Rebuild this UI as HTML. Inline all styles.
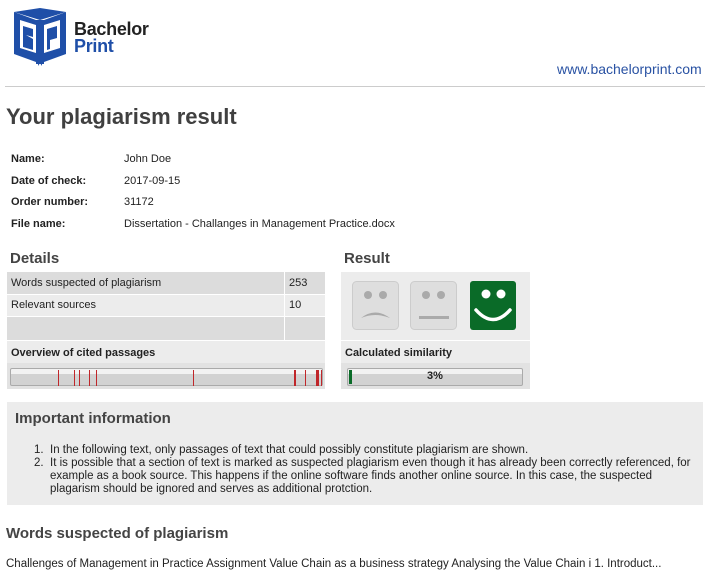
<!DOCTYPE html>
<html><head><meta charset="utf-8"><style>
*{margin:0;padding:0;box-sizing:border-box}
body{width:714px;height:577px;background:#fff;font-family:"Liberation Sans",sans-serif;color:#222;position:relative;overflow:hidden}
.a{position:absolute;white-space:nowrap}
.lab{font-weight:bold;font-size:11px;color:#222}
.val{font-size:11px;color:#222}
h2{font-size:15px;font-weight:bold;color:#444}
.red{position:absolute;top:1px;width:1px;height:16px;background:#c0262a}
</style></head><body>
<svg class="a" style="left:12px;top:6px" width="56" height="60" viewBox="0 0 56 60">
<path d="M2 6 L24 14 L24 56 L2 48 Z M32 14 L54 6 L54 48 L32 56 Z" fill="#1f4fa8"/>
<path d="M2 6 L28 2 L54 6 L28 14 Z" fill="#1f4fa8"/>
<path d="M8 14 L24 19 L24 47 L8 42 Z M32 19 L48 14 L48 42 L32 47 Z" fill="#fff"/>
<path d="M11 20 L21 23 L21 31 L14 29 L21 33 L21 44 L11 41 Z" fill="#1f4fa8"/>
<path d="M35 23 L45 20 L45 32 L38 34 L38 43 L35 44 Z" fill="#1f4fa8"/>
<rect x="24" y="14" width="8" height="44" fill="#1f4fa8"/>
<path d="M26 52 L30 52 L30 60 L28 57 L26 60 Z" fill="#1f4fa8"/>
</svg>
<div class="a" style="left:74px;top:20px;font-size:18px;font-weight:bold;color:#222;line-height:18px;letter-spacing:-0.3px">Bachelor</div>
<div class="a" style="left:74px;top:37px;font-size:18px;font-weight:bold;color:#1f4fa8;line-height:18px;letter-spacing:-0.3px">Print</div>
<div class="a" style="left:557px;top:61px;font-size:14px;color:#2952a3">www.bachelorprint.com</div>
<div class="a" style="left:5px;top:86px;width:700px;height:1px;background:#ccc"></div>
<div class="a" style="left:6px;top:104px;font-size:22px;font-weight:bold;color:#404040">Your plagiarism result</div>
<div class="a lab" style="left:11px;top:153px">Name:</div><div class="a val" style="left:124px;top:153px">John Doe</div>
<div class="a lab" style="left:11px;top:175px">Date of check:</div><div class="a val" style="left:124px;top:175px">2017-09-15</div>
<div class="a lab" style="left:11px;top:196px">Order number:</div><div class="a val" style="left:124px;top:196px">31172</div>
<div class="a lab" style="left:11px;top:218px">File name:</div><div class="a val" style="left:124px;top:218px">Dissertation - Challanges in Management Practice.docx</div>
<h2 class="a" style="left:10px;top:250px">Details</h2>
<h2 class="a" style="left:344px;top:250px">Result</h2>
<div class="a" style="left:7px;top:272px;width:318px;height:117px;background:#ececec"></div>
<div class="a" style="left:7px;top:272px;width:318px;height:22px;background:#dcdcdc"></div>
<div class="a" style="left:7px;top:316px;width:318px;height:24px;background:#dcdcdc"></div>
<div class="a" style="left:7px;top:294px;width:318px;height:1px;background:#fff"></div>
<div class="a" style="left:7px;top:316px;width:318px;height:1px;background:#fff"></div>
<div class="a" style="left:7px;top:340px;width:318px;height:1px;background:#fff"></div>
<div class="a" style="left:284px;top:272px;width:1px;height:68px;background:#fff"></div>
<div class="a val" style="left:11px;top:277px">Words suspected of plagiarism</div>
<div class="a val" style="left:289px;top:277px">253</div>
<div class="a val" style="left:11px;top:299px">Relevant sources</div>
<div class="a val" style="left:289px;top:299px">10</div>
<div class="a lab" style="left:11px;top:347px">Overview of cited passages</div>
<div class="a" style="left:7px;top:363px;width:318px;height:26px;background:#e2e2e2"></div>
<div class="a" style="left:10px;top:368px;width:313px;height:18px;background:linear-gradient(#f2f2f2 0,#f2f2f2 30%,#d2d2d2 30%);border:1px solid #aaa;border-radius:2px">
<div class="red" style="left:47px"></div><div class="red" style="left:63px"></div><div class="red" style="left:68px"></div><div class="red" style="left:78px"></div><div class="red" style="left:85px"></div><div class="red" style="left:182px"></div><div class="red" style="left:283px;width:2px"></div><div class="red" style="left:294px"></div><div class="red" style="left:305px;width:3px"></div><div class="red" style="left:310px"></div>
</div>
<div class="a" style="left:341px;top:272px;width:189px;height:117px;background:#ececec"></div>
<div class="a" style="left:341px;top:340px;width:189px;height:1px;background:#fff"></div>
<div class="a" style="left:341px;top:363px;width:189px;height:26px;background:#e2e2e2"></div>
<svg class="a" style="left:352px;top:281px" width="166" height="50" viewBox="0 0 166 50">
<rect x="0.5" y="0.5" width="46" height="48" rx="4" fill="#dedede" stroke="#ccc"/>
<circle cx="16" cy="14" r="4" fill="#aaa"/><circle cx="31" cy="14" r="4" fill="#aaa"/>
<path d="M9 37 Q23 26 38 37 Q23 31 9 37Z" fill="#aaa"/>
<rect x="58.5" y="0.5" width="46" height="48" rx="4" fill="#dedede" stroke="#ccc"/>
<circle cx="74" cy="14" r="4" fill="#aaa"/><circle cx="89" cy="14" r="4" fill="#aaa"/>
<rect x="67" y="35" width="30" height="3" fill="#aaa"/>
<rect x="118" y="0" width="46" height="49" rx="3" fill="#0a6b28"/>
<circle cx="134" cy="13" r="4.5" fill="#fff"/><circle cx="149" cy="13" r="4.5" fill="#fff"/>
<path d="M124 29 Q141 48 158 29" stroke="#fff" stroke-width="3.5" fill="none" stroke-linecap="round"/>
</svg>
<div class="a lab" style="left:345px;top:347px">Calculated similarity</div>
<div class="a" style="left:347px;top:368px;width:176px;height:18px;background:linear-gradient(#f2f2f2 0,#f2f2f2 30%,#d2d2d2 30%);border:1px solid #aaa;border-radius:2px">
<div style="position:absolute;left:1px;top:1px;width:3px;height:14px;background:#0a6b28"></div>
<div style="position:absolute;left:0;width:100%;top:1px;text-align:center;font-size:11px;font-weight:bold;color:#222">3%</div>
</div>
<div class="a" style="left:7px;top:402px;width:696px;height:103px;background:#ececec"></div>
<div class="a" style="left:15px;top:410px;font-size:15px;font-weight:bold;color:#444">Important information</div>
<div class="a" style="left:34px;top:444px;font-size:11.5px;line-height:13px;color:#222;white-space:normal;width:664px">
<div style="position:relative;padding-left:16px"><span style="position:absolute;left:0">1.</span>In the following text, only passages of text that could possibly constitute plagiarism are shown.</div>
<div style="position:relative;padding-left:16px"><span style="position:absolute;left:0">2.</span>It is possible that a section of text is marked as suspected plagiarism even though it has already been correctly referenced, for example as a book source. This happens if the online software finds another online source. In this case, the suspected plagarism should be ignored and serves as additional protction.</div>
</div>
<div class="a" style="left:6px;top:525px;font-size:15px;font-weight:bold;color:#444">Words suspected of plagiarism</div>
<div class="a" style="left:6px;top:558px;font-size:11.5px;color:#222">Challenges of Management in Practice Assignment Value Chain as a business strategy Analysing the Value Chain i 1. Introduct...</div>
</body></html>
